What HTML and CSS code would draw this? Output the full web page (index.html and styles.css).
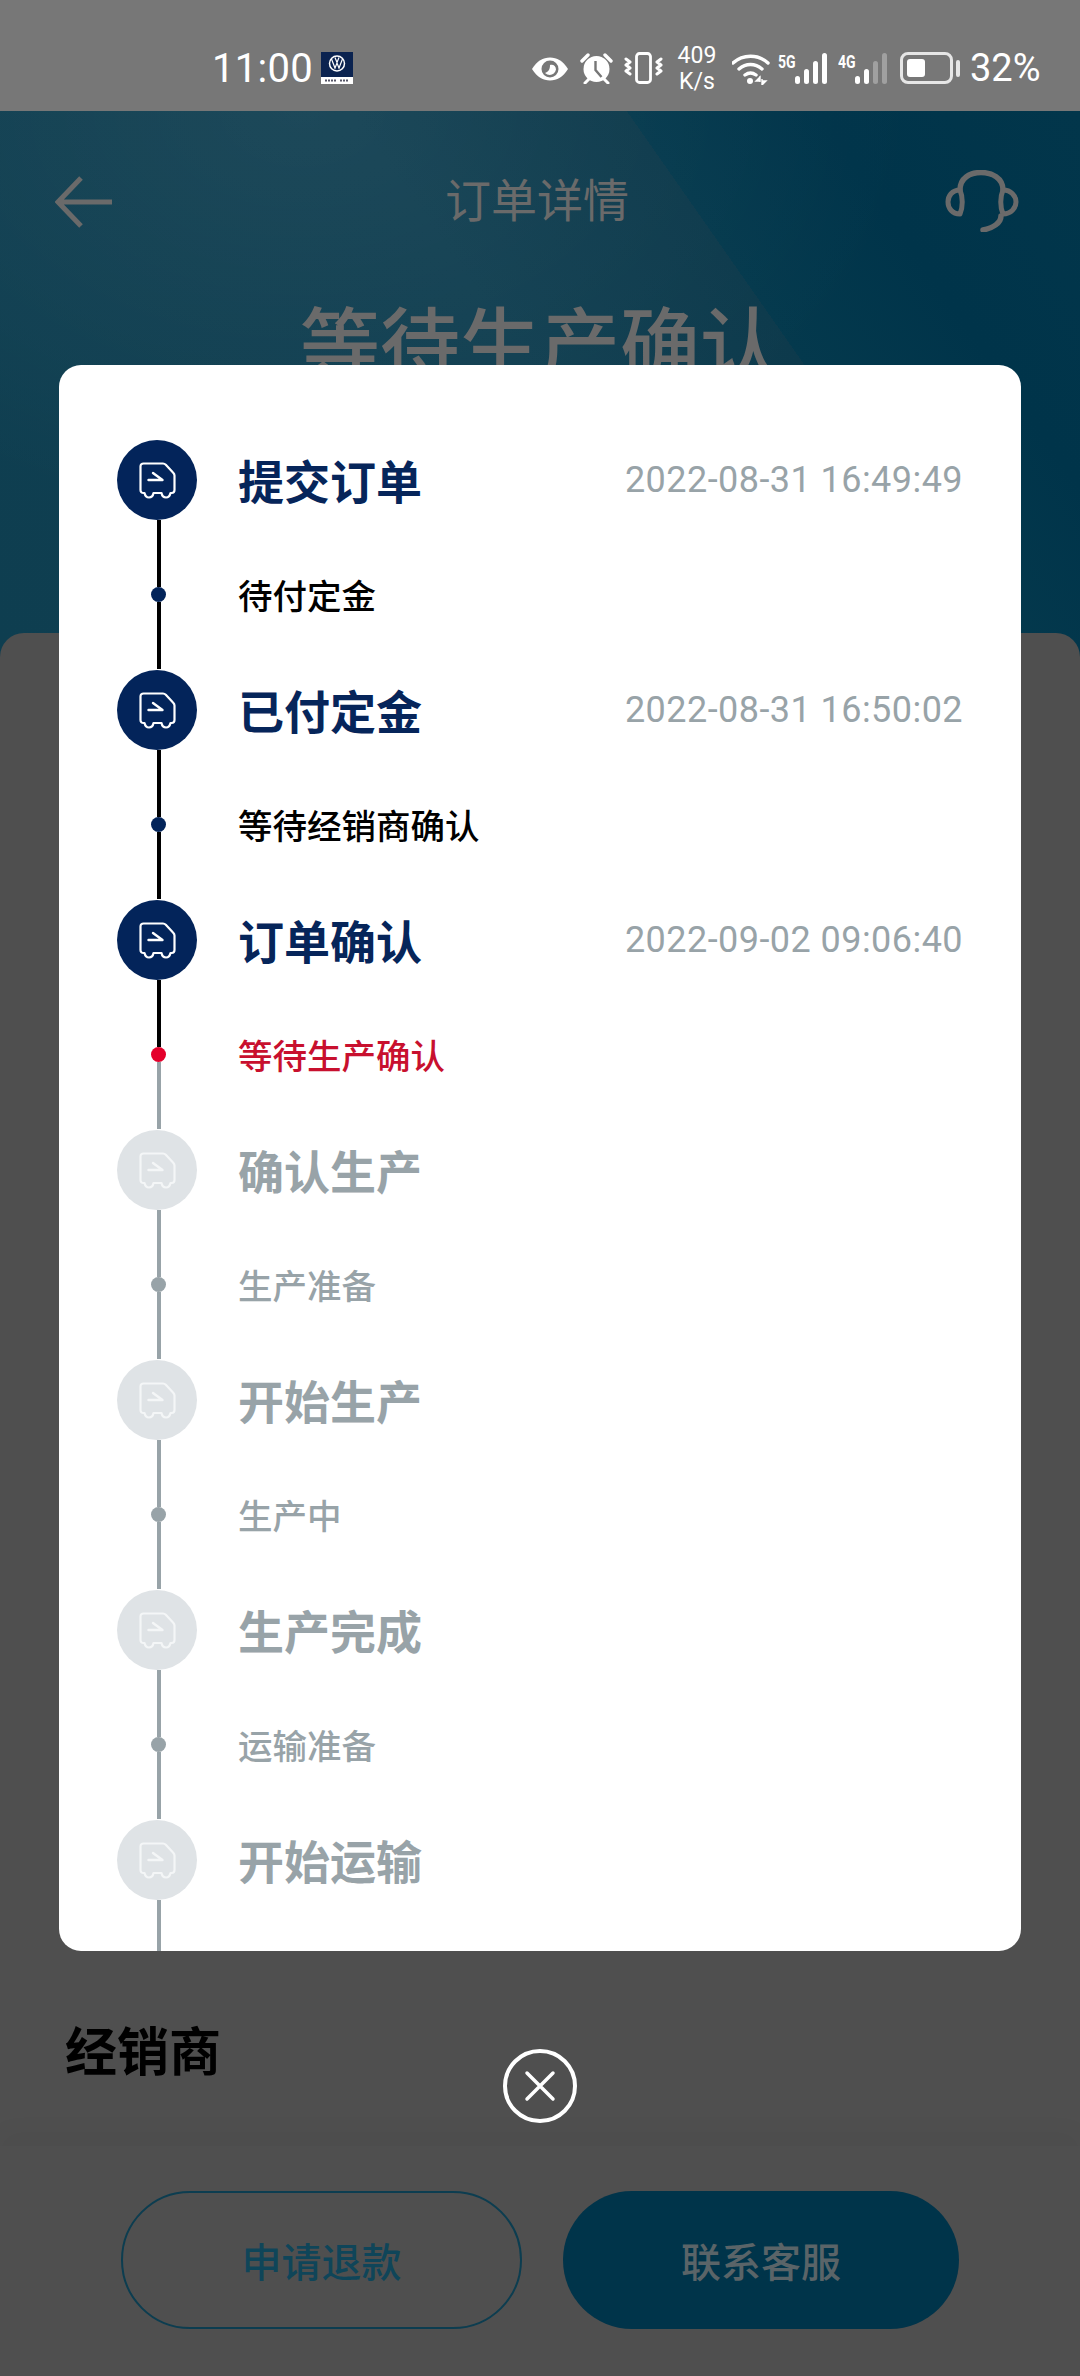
FILE: index.html
```html
<!DOCTYPE html>
<html lang="zh">
<head>
<meta charset="utf-8">
<title>订单详情</title>
<link rel="stylesheet" href="styles.css">
</head>
<body>
<svg class="defs" width="0" height="0">
  <symbol id="truck" viewBox="0 0 37 37">
    <path d="M4.500 1.500H24c1.200 0 2 .4 2.800 1.200l7.200 7.800c.9.900 1.500 1.800 1.500 3V28c0 1.800-1.200 3-3 3h-1c-.6 2.800-2.400 4.500-4.500 4.500S23 33.800 22.500 31h-8c-.5 2.800-2.400 4.500-4.500 4.500S6.100 33.800 5.500 31h-1c-1.800 0-3-1.200-3-3V4.500c0-1.800 1.200-3 3-3z" fill="none" stroke="currentColor" stroke-width="2.200" stroke-linejoin="round"/>
    <path d="M9.500 18h14L14 11" fill="none" stroke="currentColor" stroke-width="2.400" stroke-linecap="round" stroke-linejoin="round"/>
  </symbol>
</svg>
<div class="screen">
  <header class="status">
    <span class="time">11:00</span>
    <svg class="vw" width="32" height="32" viewBox="0 0 32 32"><rect width="32" height="25" fill="#0b2350"/><rect y="25" width="32" height="7" fill="#fff"/><circle cx="16" cy="11.500" r="7.500" fill="none" stroke="#fff" stroke-width="1.500"/><path d="M10.500 7l3.500 9 2-5 2 5 3.500-9M14 5.500l2 5 2-5" fill="none" stroke="#fff" stroke-width="1.200"/><path d="M4 28.500h12M19 28.500h9" stroke="#556" stroke-width="2" stroke-dasharray="2 1"/></svg>
    <div class="status-right">
      <svg class="ic-eye" width="38" height="24" viewBox="0 0 38 24"><path d="M1 12C6 4 12 .5 19 .5S32 4 37 12c-5 8-11 11.500-18 11.500S6 20 1 12z" fill="#fff"/><circle cx="19" cy="12" r="8.500" fill="#777"/><path d="M14 16c3-1 5-3 5-8 3-1 6 1 6 4.500-1 5.500-7 7-11 3.500z" fill="#fff"/></svg>
      <svg class="ic-alarm" width="33" height="31" viewBox="0 0 33 31"><circle cx="16.500" cy="16" r="13" fill="#fff"/><path d="M15.500 8v9l6 7" fill="none" stroke="#777" stroke-width="2.400"/><path d="M2 8l6-6M31 8l-6-6" stroke="#fff" stroke-width="3.400" stroke-linecap="round"/><path d="M5 30l4-4M28 30l-4-4" stroke="#fff" stroke-width="3" stroke-linecap="round"/></svg>
      <svg class="ic-vib" width="39" height="32" viewBox="0 0 39 32"><rect x="10.500" y="1.500" width="14" height="29" rx="3" transform="translate(2 0)" fill="none" stroke="#fff" stroke-width="2.800"/><path d="M2 7l4 3-4 3 4 3-4 3 4 3M37 7l-4 3 4 3-4 3 4 3-4 3" fill="none" stroke="#fff" stroke-width="3" stroke-linecap="round" stroke-linejoin="round"/></svg>
      <div class="speed"><span>409</span><span>K/s</span></div>
      <svg class="ic-wifi" width="38" height="32" viewBox="0 0 38 32"><path d="M1 10C11 1 26 1 36 10M7 16c7-6 16-6 23 0M13 22c4-3 7-3 11 0" fill="none" stroke="#fff" stroke-width="3.400" stroke-linecap="round"/><circle cx="18" cy="28" r="3" fill="#fff"/><path d="M28 24l-4 4h4zM30 32l4-4h-4zM28 23v6M30 26v6" stroke="#fff" stroke-width="1.400" fill="#fff"/></svg>
      <div class="net"><span class="net-label">5G</span>
        <span class="bars"><i class="b1"></i><i class="b2"></i><i class="b3"></i><i class="b4"></i></span></div>
      <div class="net net2"><span class="net-label">4G</span>
        <span class="bars"><i class="b1"></i><i class="b2"></i><i class="b3 off"></i><i class="b4 off"></i></span></div>
      <div class="battery"><div class="batt-body"><div class="batt-fill"></div></div><div class="batt-cap"></div></div>
      <span class="pct">32%</span>
    </div>
  </header>

  <section class="hero">
    <div class="nav">
      <svg class="nav-back" width="58" height="52" viewBox="0 0 58 52"><path d="M57 26H3M26 2L3 26l23 24" fill="none" stroke="#6a6a6a" stroke-width="5"/></svg>
      <h1 class="nav-title">订单详情</h1>
      <svg class="nav-help" width="74" height="62" viewBox="0 0 74 62"><path d="M15 20C15 8 25 2.500 36 2.500S58 8 58 20" fill="none" stroke="#6a6a6a" stroke-width="5.500" stroke-linecap="round"/><path d="M15 20C7 20 3 26 3 32s4 12 12 12c3-7 3-17 0-24zM58 20c8 0 13 6 13 12s-5 12-13 12c-3-7-3-17 0-24z" fill="none" stroke="#6a6a6a" stroke-width="5" stroke-linejoin="round"/><path d="M56 46c0 7-8 12-18 14" fill="none" stroke="#6a6a6a" stroke-width="5.500" stroke-linecap="round"/></svg>
    </div>
    <div class="hero-title">等待生产确认</div>
  </section>

  <section class="sheet">
    <h2 class="dealer">经销商</h2>
    <div class="footer">
      <button class="btn btn-outline">申请退款</button>
      <button class="btn btn-fill">联系客服</button>
    </div>
  </section>

  <div class="modal">
    <ol class="timeline">
      <li class="step done">
        <div class="rail"><div class="node"><svg class="truck"><use href="#truck"/></svg></div><div class="seg"></div><div class="dot"></div><div class="seg"></div></div>
        <div class="info"><div class="head"><span class="name">提交订单</span><time class="when">2022-08-31 16:49:49</time></div><p class="sub">待付定金</p></div>
      </li>
      <li class="step done">
        <div class="rail"><div class="node"><svg class="truck"><use href="#truck"/></svg></div><div class="seg"></div><div class="dot"></div><div class="seg"></div></div>
        <div class="info"><div class="head"><span class="name">已付定金</span><time class="when">2022-08-31 16:50:02</time></div><p class="sub">等待经销商确认</p></div>
      </li>
      <li class="step done current">
        <div class="rail"><div class="node"><svg class="truck"><use href="#truck"/></svg></div><div class="seg"></div><div class="dot"></div><div class="seg seg-off"></div></div>
        <div class="info"><div class="head"><span class="name">订单确认</span><time class="when">2022-09-02 09:06:40</time></div><p class="sub">等待生产确认</p></div>
      </li>
      <li class="step">
        <div class="rail"><div class="node"><svg class="truck"><use href="#truck"/></svg></div><div class="seg"></div><div class="dot"></div><div class="seg"></div></div>
        <div class="info"><div class="head"><span class="name">确认生产</span></div><p class="sub">生产准备</p></div>
      </li>
      <li class="step">
        <div class="rail"><div class="node"><svg class="truck"><use href="#truck"/></svg></div><div class="seg"></div><div class="dot"></div><div class="seg"></div></div>
        <div class="info"><div class="head"><span class="name">开始生产</span></div><p class="sub">生产中</p></div>
      </li>
      <li class="step">
        <div class="rail"><div class="node"><svg class="truck"><use href="#truck"/></svg></div><div class="seg"></div><div class="dot"></div><div class="seg"></div></div>
        <div class="info"><div class="head"><span class="name">生产完成</span></div><p class="sub">运输准备</p></div>
      </li>
      <li class="step">
        <div class="rail"><div class="node"><svg class="truck"><use href="#truck"/></svg></div><div class="seg"></div></div>
        <div class="info"><div class="head"><span class="name">开始运输</span></div></div>
      </li>
    </ol>
  </div>

  <button class="close" aria-label="关闭">
    <svg width="74" height="74" viewBox="0 0 74 74"><circle cx="37" cy="37" r="35" fill="none" stroke="#fff" stroke-width="4"/><path d="M24 24l26 26M50 24L24 50" stroke="#fff" stroke-width="3.500" stroke-linecap="round"/></svg>
  </button>
</div>
</body>
</html>
```
FILE: styles.css
```css
* { box-sizing: border-box; }
html, body { margin: 0; padding: 0; }
body {
  width: 1080px;
  height: 2376px;
  overflow: hidden;
  font-family: "Noto Sans CJK SC", "Noto Sans", sans-serif;
  background: #4f4f4f;
}
.defs { position: absolute; }
.screen { position: relative; width: 1080px; height: 2376px; display: flex; flex-direction: column; overflow: hidden; }

/* status bar */
.status {
  height: 111px;
  flex: none;
  background: #777;
  color: #fff;
  display: flex;
  align-items: flex-start;
  padding-left: 212px;
  padding-top: 45px;
}
.time { font: 400 40px/47px Roboto, sans-serif; width: 109px; letter-spacing: .3px; }
.vw { margin-top: 7px; }
.status-right { margin-left: 178px; display: flex; align-items: flex-start; }
.ic-eye { margin-top: 12px; }
.ic-alarm { margin: 8px 0 0 11px; }
.ic-vib { margin: 7px 0 0 11px; }
.speed { width: 38px; margin: -2px 0 0 15px; display: flex; flex-direction: column; align-items: center; font: 400 23px/26px Roboto, sans-serif; white-space: nowrap; }
.ic-wifi { margin: 8px 0 0 16px; }
.net { display: flex; margin: 9px 0 0 8px; align-items: flex-start; }
.net-label { font: 700 18px/16px Roboto, sans-serif; width: 17px; transform: scaleX(.78); transform-origin: left; }
.bars { display: flex; gap: 4px; align-items: flex-end; height: 31px; margin-top: -1px; }
.bars i { display: block; width: 5px; background: #fff; border-radius: 2.500px; }
.b1 { height: 8px; }
.b2 { height: 15px; }
.b3 { height: 23px; }
.b4 { height: 31px; }
.bars i.off { background: #a0a0a0; }
.net2 { margin-left: 11px; }
.battery { display: flex; align-items: center; margin: 7px 0 0 13px; }
.batt-body { width: 53px; height: 32px; border: 3px solid #e6e6e6; border-radius: 8px; padding: 4px; }
.batt-fill { width: 18px; height: 100%; background: #fff; border-radius: 3px; }
.batt-cap { width: 4px; height: 17px; background: #e6e6e6; border-radius: 2px; margin-left: 3px; }
.pct { font: 400 38px/47px Roboto, sans-serif; margin-left: 10px; }

/* header behind the dialog */
.hero {
  height: 546px;
  flex: none;
  background:
    radial-gradient(ellipse 620px 420px at 28% 0, rgba(255,255,255,.05), rgba(255,255,255,0)),
    linear-gradient(55deg, #0e3e50 0%, #113f51 50%, #0d3a4c 69%, #04394d 69%, #00344a 82%, #02364b 100%);
  color: #6a6a6a;
}
.nav { display: grid; grid-template-columns: 1fr auto 1fr; align-items: center; padding: 55px 61px 0 55px; height: 117px; }
.nav-help { justify-self: end; }
.nav-back { margin-top: 3px; }
.nav-title { margin: 0 0 7px; font-size: 46px; font-weight: 400; line-height: 62px; }
.hero-title { margin-top: 56px; text-align: center; font-size: 80px; line-height: 110px; font-weight: 500; }

/* sheet under the dialog */
.sheet {
  flex: 1;
  margin-top: -24px;
  background: #4f4f4f;
  border-radius: 24px 24px 0 0;
  display: flex;
  flex-direction: column;
  position: relative;
  z-index: 1;
}
.dealer { margin: 0; position: absolute; left: 65px; top: 1386px; font-size: 52px; line-height: 60px; font-weight: 700; color: #000; }
.footer {
  margin-top: auto;
  height: 230px;
  padding: 45px 121px 47px 121px;
  display: flex;
  gap: 41px;
  background: #4f4f4f;
  box-shadow: 0 -14px 24px rgba(0,0,0,.03);
}
.btn { height: 138px; border-radius: 69px; font: 500 40px/1 "Noto Sans CJK SC", sans-serif; }
.btn-outline { width: 401px; background: transparent; border: 2px solid #0c3d50; color: #0f4559; }
.btn-fill { width: 396px; background: #00344a; border: 0; color: #5a6468; }

/* dialog */
.modal {
  position: absolute;
  z-index: 2;
  left: 59px;
  top: 365px;
  width: 962px;
  height: 1586px;
  background: #fff;
  border-radius: 22px;
  overflow: hidden;
  padding: 75px 58px 0;
}
.timeline { list-style: none; margin: 0; padding: 0; }
.step { display: flex; height: 230px; color: #98a3a8; }
.rail { width: 80px; flex: none; display: flex; flex-direction: column; align-items: center; }
.node { width: 80px; height: 80px; flex: none; border-radius: 50%; background: #dfe3e6; color: #f4f6f7; display: flex; align-items: center; justify-content: center; }
.truck { width: 37px; height: 37px; }
.seg { width: 4px; height: 67px; flex: none; margin-left: 3px; background: #98a3a8; }
.dot { width: 15px; height: 15px; flex: none; margin-left: 3px; border-radius: 50%; background: #98a3a8; }
.step:last-child .seg { height: 160px; }
.info { flex: 1; margin-left: 41px; }
.head { height: 80px; display: flex; align-items: center; justify-content: space-between; }
.name { font-size: 46px; font-weight: 700; line-height: 60px; margin-bottom: 2px; }
.when { font: 400 36px/46px Roboto, sans-serif; color: #98a3a8; letter-spacing: .45px; }
.sub { margin: 50px 0 0; font-size: 34.500px; line-height: 48px; font-weight: 500; }
.done .node { background: #03245a; color: #fff; }
.done .name { color: #06255a; }
.done .sub { color: #000; }
.done .seg { background: #000; }
.done .dot { background: #03245a; }
.current .dot { background: #e4002b; }
.current .sub { color: #c8102e; }
.done .seg.seg-off { background: #98a3a8; }

.close {
  position: absolute;
  z-index: 3;
  left: 503px;
  top: 2049px;
  width: 74px;
  height: 74px;
  padding: 0;
  border: 0;
  background: none;
}
.close svg { display: block; }
```
